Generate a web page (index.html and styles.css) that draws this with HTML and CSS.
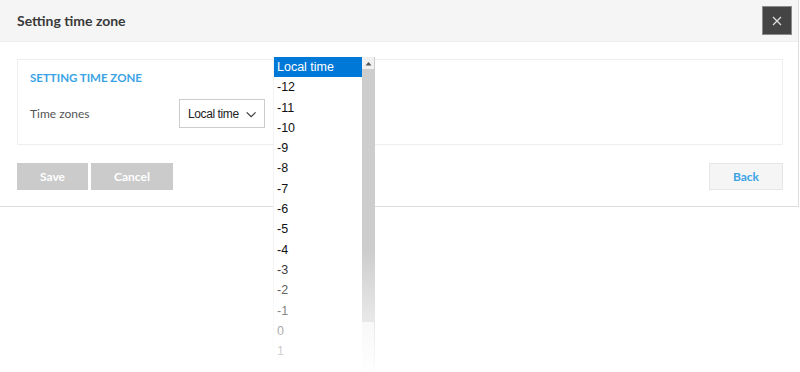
FILE: index.html
```html
<!DOCTYPE html>
<html lang="en">
<head>
	<meta charset="UTF-8">
	<title>Setting time zone</title>
	<link rel="stylesheet" href="styles.css">
</head>
<body>
<div class="dialog">
	<div class="dialog-head">
		<h1 class="title">Setting time zone</h1>
		<a href="#" class="close">
			<svg width="10" height="10" viewBox="0 0 10 10"><path d="M1 1L9 9M9 1L1 9" stroke="#ddd" stroke-width="1.3"/></svg>
		</a>
	</div>
	<div class="dialog-body">
		<div class="box">
			<h2 class="box-title">SETTING TIME ZONE</h2>
			<div class="row">
				<label class="label">Time zones</label>
				<div class="select">
					<span>Local time</span>
					<svg width="14" height="9" viewBox="0 0 14 9"><path d="M1 1.5L7 7.5L13 1.5" fill="none" stroke="#333" stroke-width="1.5"/></svg>
				</div>
			</div>
		</div>
		<div class="actions">
			<a href="#" class="btn grey">Save</a>
			<a href="#" class="btn grey">Cancel</a>
			<a href="#" class="btn back">Back</a>
		</div>
	</div>
</div>

<!-- 下拉列表 -->
<div class="dropdown">
	<ul class="options">
		<li class="on">Local time</li>
		<li>-12</li>
		<li>-11</li>
		<li>-10</li>
		<li>-9</li>
		<li>-8</li>
		<li>-7</li>
		<li>-6</li>
		<li>-5</li>
		<li>-4</li>
		<li>-3</li>
		<li>-2</li>
		<li>-1</li>
		<li>0</li>
		<li>1</li>
	</ul>
	<div class="scrollbar">
		<div class="arrow-up">
			<svg width="7" height="5" viewBox="0 0 7 5"><path d="M0.5 4.5L3.5 1L6.5 4.5Z" fill="#555"/></svg>
		</div>
		<div class="thumb"></div>
	</div>
</div>
<div class="fade"></div>
</body>
</html>
```

FILE: styles.css
```css
body,ul,li,h1,h2{margin: 0;padding: 0;list-style: none;}
body{font-family: Lato, "Noto Sans", sans-serif;color: #333;background: #fff;}
a{text-decoration: none;}

.dialog{width: 798px;height: 206px;border-right: 1px solid #ddd;border-bottom: 1px solid #ddd;}
.dialog-head{height: 42px;background: #f5f5f5;border-bottom: 1px solid #ededed;display: flex;align-items: center;justify-content: space-between;padding: 0 6px 0 17px;box-sizing: border-box;}
.title{font-size: 14px;font-weight: bold;color: #3a3a3a;}
.close{width: 28px;height: 27px;background: #444;border: 1px solid #8a8a8a;display: flex;align-items: center;justify-content: center;}

.dialog-body{padding: 17px 15px 0 17px;}
.box{height: 86px;border: 1px solid #eee;box-sizing: border-box;padding: 11px 12px 0;}
.box-title{font-size: 11.5px;font-weight: bold;color: #3ba3e6;}
.row{display: flex;align-items: center;margin-top: 15px;}
.label{width: 149px;font-size: 12px;color: #555;}
.select{width: 86px;height: 29px;border: 1px solid #ccc;box-sizing: border-box;display: flex;align-items: center;padding: 1px 8px 0;gap: 7px;font-family: "Liberation Sans", Arial, sans-serif;font-size: 12px;color: #222;letter-spacing: -0.4px;white-space: nowrap;}

.actions{display: flex;margin-top: 18px;gap: 3px;}
.btn{height: 27px;line-height: 27px;text-align: center;font-size: 12px;font-weight: bold;box-sizing: border-box;}
.btn.grey{background: #cbcbcb;color: #fff;width: 71px;}
.btn.grey+.btn.grey{width: 82px;}
.btn.back{margin-left: auto;width: 74px;background: #f5f5f5;border: 1px solid #e6e6e6;color: #3ba3e6;line-height: 25px;}

.dropdown{position: absolute;left: 273px;top: 57px;width: 100px;height: 315px;background: #fff;border-right: 1px solid #ccc;border-left: 1px solid #f2f2f2;display: flex;font-family: "Liberation Sans", Arial, sans-serif;font-size: 12.5px;}
.options{flex: 1;overflow: hidden;}
.options li{height: 20.3px;line-height: 21px;padding-left: 3px;color: #111;}
.options li.on{background: #0078d7;color: #fff;}
.scrollbar{width: 12px;background: #f0f0f0;display: flex;flex-direction: column;}
.arrow-up{height: 12px;display: flex;align-items: center;justify-content: center;}
.thumb{height: 253px;background: #cdcdcd;}

.fade{position: absolute;left: 0;top: 250px;width: 100%;height: 122px;background: linear-gradient(rgba(255,255,255,0), rgba(255,255,255,0.95));}
```
